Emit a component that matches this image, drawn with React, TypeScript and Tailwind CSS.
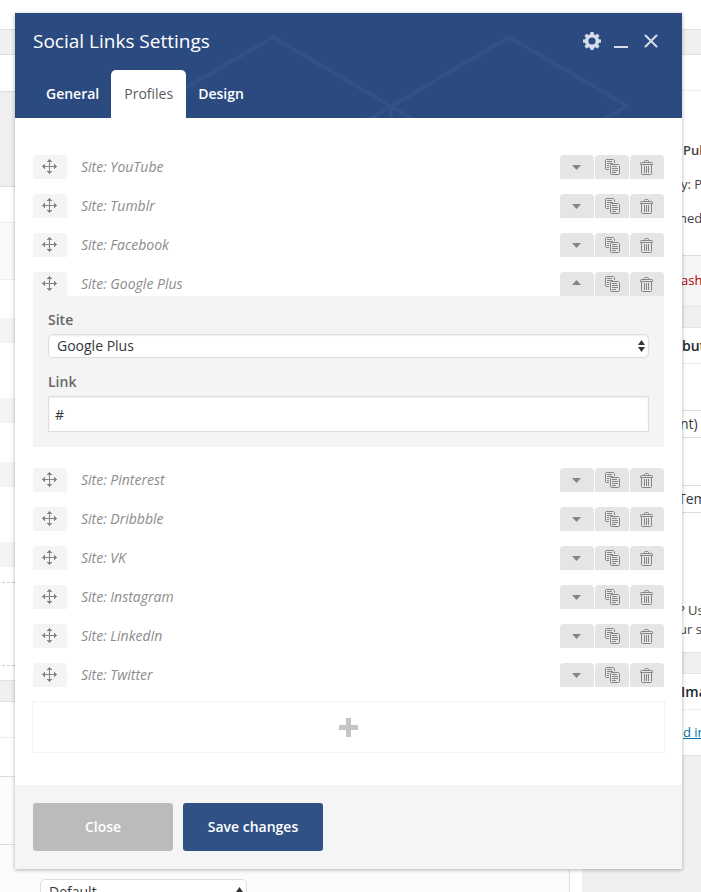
import { useState } from "react";

const sites = [
  { name: "YouTube" },
  { name: "Tumblr" },
  { name: "Facebook" },
  { name: "Google Plus", open: true },
  { name: "Pinterest" },
  { name: "Dribbble" },
  { name: "VK" },
  { name: "Instagram" },
  { name: "LinkedIn" },
  { name: "Twitter" },
];

function MoveIcon() {
  return (
    <svg width="16" height="16" viewBox="0 0 16 16" fill="#858585" shapeRendering="crispEdges" aria-hidden="true">
      <path d="M7 1h1v13H7zM1 7h13v1H1z" />
      <path d="M7 0h1v1h1v1h1v1H5V2h1V1h1zM5 12h5v1H9v1H8v1H7v-1H6v-1H5zM0 7h1V6h1V5h1v5H2V9H1V8H0zM12 5h1v1h1v1h1v1h-1v1h-1v1h-1z" />
    </svg>
  );
}

function CaretIcon({ up }: { up?: boolean }) {
  return (
    <svg width="10" height="8" viewBox="0 0 10 8" fill="#858585" aria-hidden="true">
      {up ? <path d="M4.500 0L9 5H0z" /> : <path d="M0 2h9L4.500 7z" />}
    </svg>
  );
}

function CopyIcon() {
  return (
    <svg width="16" height="16" viewBox="-1 0 16 16" fill="none" stroke="#858585" aria-hidden="true">
      <path d="M4 10.500H1.200l-.7-.7V1.200l.7-.7h7.100l1.200 1.200V4M2 2.500h5M2 4.500h6M2 6.500h2M2 8.500h2" />
      <path d="M6.200 5.500h7.100l1.200 1.200v8.100l-.7.7H6.200l-.7-.7V6.200zM7 7.500h5M7 9.500h6M7 11.500h6M7 13.500h4" />
    </svg>
  );
}

function TrashIcon() {
  return (
    <svg width="14" height="16" viewBox="0 0 14 16" fill="none" stroke="#858585" aria-hidden="true">
      <path d="M4.500 3V2.500q0-1 1-1h2q1 0 1 1V3M.500 5.500V4.500q0-1 1-1h10q1 0 1 1v1zM1.500 6v8.500q0 1 1 1h8q1 0 1-1V6M4.500 7v7M6.500 7v7M8.500 7v7" />
    </svg>
  );
}

function GearIcon() {
  return (
    <svg width="18" height="18" viewBox="0 0 18 18" fill="#d6dce8" aria-hidden="true">
      <path
        fillRule="evenodd"
        d="M7.500 0h3l.5 2.400 1.400.6 2-1.300 2.100 2.100-1.300 2 .6 1.400 2.200.4v3l-2.200.4-.6 1.400 1.300 2-2.100 2.100-2-1.300-1.400.6-.5 2.200h-3L7 15.800l-1.400-.6-2 1.300-2.100-2.100 1.300-2-.6-1.400L0 10.600v-3l2.200-.4.600-1.400-1.300-2 2.100-2.100 2 1.300L7 2.400zM9 5.400a3.600 3.600 0 1 0 0 7.200 3.600 3.600 0 0 0 0-7.200z"
      />
    </svg>
  );
}

function SortArrows({ className }: { className: string }) {
  return (
    <svg className={className} width="7" height="12" viewBox="0 0 7 12" fill="#32373c" aria-hidden="true">
      <path d="M3.500 0L7 5H0zM0 7h7l-3.500 5z" />
    </svg>
  );
}

const toolButton = "flex h-6 w-[34px] items-center justify-center rounded-t-sm bg-[#e5e5e5]";

function SiteRow({ name, open }: { name: string; open?: boolean }) {
  return (
    <li className={open ? "mb-1.5" : ""}>
      <div className="flex h-6 items-center">
        <button type="button" aria-label={`Move ${name}`} className="flex h-6 w-[34px] items-center justify-center rounded-t-sm bg-[#f4f4f4]">
          <MoveIcon />
        </button>
        <span className="ml-3.5 flex-1 text-sm text-[#8c8c8c] italic">Site: {name}</span>
        <div className="flex gap-px">
          <button type="button" aria-label={`Toggle ${name}`} aria-expanded={!!open} className={toolButton}>
            <CaretIcon up={open} />
          </button>
          <button type="button" aria-label={`Clone ${name}`} className={toolButton}>
            <CopyIcon />
          </button>
          <button type="button" aria-label={`Delete ${name}`} className={toolButton}>
            <TrashIcon />
          </button>
        </div>
      </div>
      {open && <SiteForm />}
    </li>
  );
}

function SiteForm() {
  const [site, setSite] = useState("Google Plus");
  const [link, setLink] = useState("#");
  return (
    <div className="bg-[#f4f4f4] px-[15px] pt-3.5 pb-[15px]">
      <label htmlFor="site" className="mb-1 block text-sm font-semibold text-[#666]">
        Site
      </label>
      <div className="relative">
        <select
          id="site"
          value={site}
          onChange={(e) => setSite(e.target.value)}
          className="block h-6 w-full appearance-none rounded-[5px] border border-[#ddd] bg-white px-2 text-sm leading-[22px] text-[#32373c] shadow-[inset_0_1px_2px_rgba(0,0,0,0.07)]"
        >
          {sites.map((s) => (
            <option key={s.name}>{s.name}</option>
          ))}
        </select>
        <SortArrows className="pointer-events-none absolute top-1.5 right-1" />
      </div>
      <label htmlFor="link" className="mt-3.5 mb-1 block text-sm font-semibold text-[#666]">
        Link
      </label>
      <input
        id="link"
        value={link}
        onChange={(e) => setLink(e.target.value)}
        className="block h-9 w-full border border-[#ddd] bg-white px-1.5 text-sm text-[#32373c] shadow-[inset_0_1px_2px_rgba(0,0,0,0.07)]"
      />
    </div>
  );
}

function MainColumn() {
  return (
    <div className="flex min-w-0 flex-1 flex-col bg-white">
      <div className="h-[30px] border-b border-[#dedede]" />
      <div className="h-[25px] border-b border-[#dedede] bg-[#f0f0f0]" />
      <div className="h-[37px] border-b border-[#dedede]" />
      <div className="h-[95px] border-b border-[#dedede] bg-[#efefef]" />
      <div className="h-9 border-b border-[#eee]" />
      <div className="h-[57px] border-b border-[#eee] bg-[#fafafa]" />
      <div className="h-[38px]" />
      <div className="h-[25px] bg-[#f4f4f4]" />
      <div className="h-[55px]" />
      <div className="h-[25px] bg-[#f4f4f4]" />
      <div className="h-[39px]" />
      <div className="h-[25px] bg-[#f4f4f4]" />
      <div className="h-[55px]" />
      <div className="h-[25px] bg-[#f4f4f4]" />
      <div className="ml-0.5 h-4 border-b border-dashed border-[#ccc]" />
      <div className="ml-0.5 h-[83px] border-b border-dashed border-[#ccc]" />
      <div className="h-[15px] border-b border-[#e2e2e2]" />
      <div className="h-[21px] border-b border-[#e2e2e2] bg-[#f0f0f0]" />
      <div className="h-9 border-b border-[#eee]" />
      <div className="h-[39px] border-b border-[#ddd]" />
      <div className="flex flex-1">
        <div className="flex flex-1 flex-col border-r border-[#ddd] bg-[#fcfcfc]">
          <div className="h-[68px] border-b border-[#ddd]" />
          <div className="h-[47px] overflow-hidden pt-[34px] pl-10">
            <div className="relative w-[207px]">
              <select
                aria-label="Layout"
                className="block h-[26px] w-full appearance-none rounded-[5px] border border-[#ddd] bg-white px-2 text-sm leading-6 text-[#32373c]"
              >
                <option>Default</option>
              </select>
              <SortArrows className="pointer-events-none absolute top-2 right-1" />
            </div>
          </div>
        </div>
        <div className="w-3" />
      </div>
    </div>
  );
}

function Sidebar() {
  return (
    <div className="w-[119px] overflow-hidden bg-[#f0f0f0] text-[13px] leading-[34px] whitespace-nowrap text-[#444]">
      <div className="h-[30px] border-b border-[#dedede] bg-white" />
      <div className="h-[25px] border-b border-[#e2e2e2]" />
      <div className="h-9 border-b border-[#eee] bg-white" />
      <div className="h-[165px] border-b border-[#ddd] bg-white pt-[42px] pl-[101px]">
        <p className="font-semibold">Pub</p>
        <p className="-ml-0.5">y: P</p>
        <p className="-ml-1">ned</p>
      </div>
      <div className="h-[51px] border-b border-[#e5e5e5] bg-[#f5f5f5] pt-[7px] pl-[99px]">
        <a href="#trash" className="text-[#a00]">ash</a>
      </div>
      <div className="h-[21px] border-b border-[#e5e5e5]" />
      <div className="h-9 border-b border-[#eee] bg-white pl-[100px] text-sm leading-9 font-semibold text-[#23282d]">but</div>
      <div className="h-[47px] border-b border-[#ddd] bg-white" />
      <div className="h-[27px] border-b border-[#ddd] bg-white pl-[98px] text-sm leading-[26px] text-[#32373c]">nt)</div>
      <div className="h-12 border-b border-[#ddd] bg-white" />
      <div className="h-[27px] border-b border-[#ddd] bg-white pl-24 text-sm leading-[26px] text-[#32373c]">Tem</div>
      <div className="h-[140px] border-b border-[#e2e2e2] bg-white pt-[88px] pl-[97px] leading-[19px]">
        <p>? Us</p>
        <p>ur s</p>
      </div>
      <div className="h-[21px] border-b border-[#e5e5e5]" />
      <div className="h-9 border-b border-[#eee] bg-white pl-[99px] text-sm leading-9 font-semibold text-[#23282d]">Ima</div>
      <div className="h-[46px] border-b border-[#e2e2e2] bg-white pt-[5px] pl-[101px]">
        <a href="#featured" className="text-[#0073aa] underline">d in</a>
      </div>
    </div>
  );
}

export default function App() {
  return (
    <div className="relative flex min-h-screen overflow-hidden bg-[#f0f0f0] font-['Open_Sans','Noto_Sans',sans-serif]">
      <MainColumn />
      <Sidebar />

      <section
        role="dialog"
        aria-label="Social Links Settings"
        className="absolute top-[13px] right-[19px] left-[15px] bg-white shadow-[0_1px_4px_rgba(0,0,0,0.3)]"
      >
        <header className="relative flex h-[105px] flex-col justify-between overflow-hidden bg-[#2b4b80]">
          <svg
            className="pointer-events-none absolute top-0 left-0"
            width="667"
            height="105"
            viewBox="0 0 667 105"
            fill="none"
            stroke="#315188"
            strokeWidth="4"
            aria-hidden="true"
          >
            <path d="M140 93L258 24L399 107M353 107L494 24L612 93L588 107M376 93v14" />
          </svg>
          <div className="relative flex items-center justify-between pt-3 pr-6 pl-[18px]">
            <h1 className="text-[19px] leading-8 text-white">Social Links Settings</h1>
            <div className="flex items-center gap-[13px]">
              <button type="button" aria-label="Settings">
                <GearIcon />
              </button>
              <button type="button" aria-label="Minimize" className="flex h-3.5 w-3.5 items-end">
                <span className="block h-0.5 w-full bg-[#d6dce8]" />
              </button>
              <button type="button" aria-label="Close dialog" className="ml-[3px]">
                <svg width="14" height="14" viewBox="0 0 14 14" stroke="#d6dce8" strokeWidth="2" strokeLinecap="round" aria-hidden="true">
                  <path d="M1.500 1.500l11 11M12.500 1.500l-11 11" />
                </svg>
              </button>
            </div>
          </div>
          <nav className="relative flex h-12 pl-[18px] text-sm font-semibold text-white">
            <button type="button" className="pr-3 pl-[13px]">General</button>
            <button type="button" className="rounded-t-[5px] bg-white px-[13px] font-normal text-[#5c5c5c]">Profiles</button>
            <button type="button" className="px-3">Design</button>
          </nav>
        </header>

        <div className="px-[18px] pt-[37px] pb-8">
          <ul className="flex flex-col gap-[15px]">
            {sites.map((s) => (
              <SiteRow key={s.name} name={s.name} open={s.open} />
            ))}
          </ul>
          <div className="-mx-px mt-3.5 flex">
            <button type="button" aria-label="Add profile" className="flex h-[52px] flex-1 items-center justify-center border border-dotted border-[#e8e8e8]">
              <svg width="19" height="19" viewBox="0 0 19 19" fill="#c3c6c9" aria-hidden="true">
                <path d="M7 0h5v7h7v5h-7v7H7v-7H0V7h7z" />
              </svg>
            </button>
          </div>
        </div>

        <footer className="flex gap-2.5 bg-[#f5f5f5] p-[18px] text-sm font-semibold text-white">
          <button type="button" className="h-12 w-[140px] rounded-[3px] bg-[#bbb]">Close</button>
          <button type="button" className="h-12 w-[140px] rounded-[3px] bg-[#305186]">Save changes</button>
        </footer>
      </section>
    </div>
  );
}
